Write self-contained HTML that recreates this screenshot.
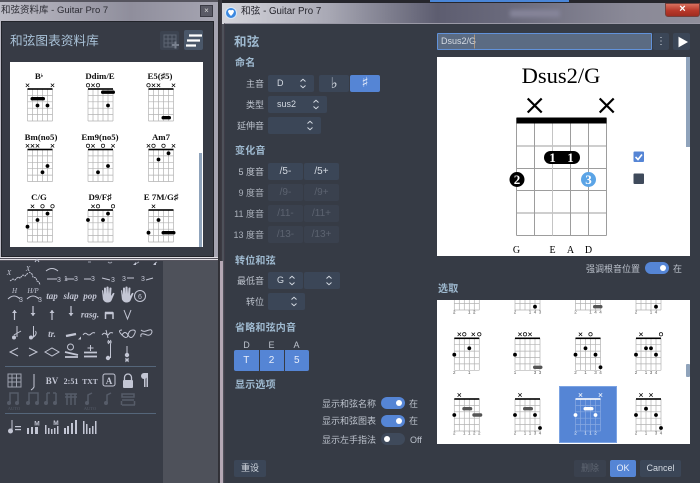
<!DOCTYPE html>
<html><head><meta charset="utf-8"><style>
*{box-sizing:border-box}
html,body{margin:0;padding:0;width:700px;height:483px;overflow:hidden;background:#4e515a}
body{position:relative;font-family:"Liberation Sans","Noto Sans CJK SC",sans-serif}
.a{position:absolute}
.t{position:absolute;white-space:nowrap;line-height:14px;font-size:9px;color:#bcc2cc}
.r{text-align:right}
.h{position:absolute;white-space:nowrap;line-height:14px;font-size:10px;letter-spacing:.2px;font-weight:bold;color:#9fbad0}
.b{position:absolute;background:#3b4657;border-radius:2px;color:#d4dae2;font-size:10px;text-align:center;height:17px;line-height:17px}
.dim{background:#3a414e;color:#5c6370}
.blue{background:#5585d5;color:#e8eefa}
.sel{position:absolute;background:#3b4657;border-radius:2px;height:17px;color:#d4dae2;font-size:9px;line-height:17px;padding-left:9px}
.sel svg{position:absolute;top:3px;right:5px}
.tg{position:absolute;width:24px;height:12px;border-radius:6px;background:#5585d5}
.tg:after{content:"";position:absolute;right:3px;top:3px;width:6px;height:6px;border-radius:3px;background:#fff}
.tg.off{background:#3f4a5b}
.tg.off:after{right:auto;left:3px}
svg{position:absolute;left:0;top:0;overflow:hidden}
.s{font-family:"Liberation Serif",serif}
</style></head><body>
<svg width="0" height="0" style="position:absolute"><defs>
<g id="g"><path d="M0 0V32M5 0V32M10 0V32M15 0V32M20 0V32M25 0V32M0 6.4H25M0 12.8H25M0 19.2H25M0 25.6H25M0 32H25" stroke="currentColor" stroke-opacity=".3" stroke-width=".7" fill="none"/><rect x="0" y="-.8" width="25" height="1.6" fill="currentColor"/></g>
<path id="x" d="M-1.7-1.7L1.7 1.7M-1.7 1.7L1.7-1.7" stroke="currentColor" stroke-width=".7" fill="none"/>
<circle id="o" r="1.7" fill="none" stroke="currentColor" stroke-width=".7"/>
<circle id="d" r="1.9" fill="currentColor"/>
<g id="ud"><path d="M-2.5 3L0 .8L2.5 3M-2.5 7L0 9.2L2.5 7" fill="none" stroke="#d4dae2" stroke-width="1"/></g>
</defs></svg>

<!-- library window -->
<div class="a" style="left:0;top:0;width:218px;height:261px;background:linear-gradient(90deg,#bdbcc6,#8f8e9c 60%,#a6a5b2)"></div>
<div class="a" style="left:0;top:0;width:218px;height:2px;background:#55545e"></div>
<div class="a" style="left:0;top:257px;width:218px;height:4px;background:repeating-linear-gradient(180deg,#e2e0e6 0 1px,#55545e 1px 2px)"></div>
<div class="t" style="left:1px;top:4px;color:#2c2c34;font-size:9.5px">和弦资料库 - Guitar Pro 7</div>
<div class="a" style="left:200px;top:5px;width:13px;height:12px;background:#5a5a66;border:1px solid #3a3a44;color:#ddd;font-size:8px;line-height:9px;text-align:center">×</div>
<div class="a" style="left:1px;top:21px;width:213px;height:236px;background:#373b45;border:1px solid #22242a"></div>
<div class="t" style="left:10px;top:33px;font-size:12.7px;line-height:16px;color:#a9c2d8">和弦图表资料库</div>
<div class="a" style="left:160px;top:31px;width:19px;height:19px;background:#3c4350;border-radius:2px"></div>
<div class="a" style="left:184px;top:30px;width:19px;height:20px;background:#4a5769;border-radius:2px"></div>
<div class="a" style="left:10px;top:62px;width:193px;height:185px;background:#fff"></div>
<div class="a" style="left:199px;top:153px;width:3px;height:94px;background:#8fa3bb"></div>

<!-- main svg for library -->
<svg width="700" height="483" style="color:#000">
<path d="M164 35h12v12h-12zM164 39h12M164 43h12M168 35v12M172 35v12" fill="none" stroke="#5d6472"/><path d="M172 45h7M175.500 41.500v7" stroke="#78808e" stroke-width="2"/>
<path d="M190 35.500h13M188 40.500h13M187 45.500h10" stroke="#fff" stroke-width="2.200" fill="none" transform="translate(-1 0)"/>
<g class="s" font-size="8.8" font-weight="bold" text-anchor="middle" fill="#111">
<text x="39" y="79">B<tspan font-size="5" dy="-2">♭</tspan></text><text x="100" y="79">Ddim/E</text><text x="160" y="79">E5(♯5)</text>
<text x="41" y="140">Bm(no5)</text><text x="100" y="140">Em9(no5)</text><text x="161" y="140">Am7</text>
<text x="39" y="200">C/G</text><text x="100" y="200">D9/F♯</text><text x="161" y="200">E 7M/G♯</text>
</g>
<g transform="translate(27.500 89)"><use href="#g"/><use href="#x" x="0" y="-3.700"/><use href="#x" x="25" y="-3.700"/><rect x="3" y="8" width="14.500" height="3.400" rx="1.700"/><use href="#d" x="10" y="16.500"/><use href="#d" x="20" y="16.500"/></g>
<g transform="translate(88 89)"><use href="#g"/><use href="#o" x="0" y="-3.700"/><use href="#x" x="5" y="-3.700"/><use href="#o" x="10" y="-3.700"/><rect x="13" y="1.500" width="14" height="3.400" rx="1.700"/><use href="#d" x="20" y="16.500"/></g>
<g transform="translate(148.500 89)"><use href="#g"/><use href="#o" x="0" y="-3.700"/><use href="#x" x="5" y="-3.700"/><use href="#x" x="10" y="-3.700"/><use href="#x" x="25" y="-3.700"/><rect x="13" y="27" width="9.500" height="3.400" rx="1.700"/></g>
<g transform="translate(27.500 149.500)"><use href="#g"/><use href="#x" x="0" y="-3.700"/><use href="#x" x="5" y="-3.700"/><use href="#x" x="10" y="-3.700"/><use href="#x" x="25" y="-3.700"/><use href="#d" x="20" y="16.500"/><use href="#d" x="15" y="22.800"/></g>
<g transform="translate(88 149.500)"><use href="#g"/><use href="#o" x="0" y="-3.700"/><use href="#x" x="5" y="-3.700"/><use href="#o" x="15" y="-3.700"/><use href="#x" x="25" y="-3.700"/><use href="#d" x="20" y="16.500"/><use href="#d" x="10" y="22.800"/></g>
<g transform="translate(148.500 149.500)"><use href="#g"/><use href="#x" x="0" y="-3.700"/><use href="#o" x="5" y="-3.700"/><use href="#o" x="15" y="-3.700"/><use href="#x" x="25" y="-3.700"/><use href="#d" x="20" y="3.800"/><use href="#d" x="10" y="10"/></g>
<g transform="translate(27.500 210)"><use href="#g"/><use href="#x" x="5" y="-3.700"/><use href="#o" x="15" y="-3.700"/><use href="#o" x="25" y="-3.700"/><use href="#d" x="20" y="3.600"/><use href="#d" x="10" y="10"/><use href="#d" x="0" y="16.700"/></g>
<g transform="translate(88 210)"><use href="#g"/><use href="#x" x="5" y="-3.700"/><use href="#o" x="10" y="-3.700"/><use href="#o" x="25" y="-3.700"/><use href="#d" x="20" y="3.600"/><use href="#d" x="0" y="10"/><use href="#d" x="15" y="10"/></g>
<g transform="translate(148.500 210)"><use href="#g"/><use href="#x" x="5" y="-3.700"/><use href="#d" x="10" y="10"/><use href="#d" x="0" y="22.700"/><rect x="13" y="21" width="14" height="3.400" rx="1.700"/></g>
</svg>

<!-- palette -->
<div class="a" style="left:0;top:261px;width:163px;height:222px;background:#383c46"></div>
<svg width="163" height="483" style="color:#c3c6d4;left:0;top:0">
<g fill="none" stroke="#c3c6d4" stroke-width="1">
<path d="M10 281l3-2 2 1 3-3 2 1 3-3 2 1 3-3" stroke-dasharray="2 .6"/><path d="M29 272l3 2 1 3 3 1 1 3 2 1 1 3" stroke-dasharray="2 .6"/>
<path d="M35 262l2-3M37 259l2 3" />
<path d="M46 271q6-5 12 0"/><path d="M47 279h10M65 279h9M84 279h7M102 278l8 2M127 278h7M146 280l7-2"/>
<path d="M88 262h3M108 262q2 2 4 0M135 264l4-2M154 264l3-2" opacity=".7"/>
<path d="M8 299q6-6 12 0M27 299q6-6 12 0"/><path d="M140 296m-5.500 0a5.500 5.500 0 1 0 11 0a5.500 5.500 0 1 0-11 0"/>
<path d="M14.500 320v-10M33 306v10M52 320v-10M71 306v10" stroke-width="1.200"/>
<path d="M12 313l2.500-3 2.500 3zM30.500 313l2.500 3 2.500-3zM49.500 313l2.500-3 2.500 3zM68.500 313l2.500 3 2.500-3z" fill="#c3c6d4" stroke="none"/>
<path d="M105.500 319v-6h7.500v6" stroke-width="1.500"/><path d="M105 313h8" stroke-width="2.500"/><path d="M124 310l3.500 9 3.500-9"/>
<path d="M17 326v11M33.500 326v11q4-3 2-6" /><path d="M14 335l7-4"/>
<path d="M66 336l10-2" stroke-width="2.400"/>
<path d="M83 335q2-3 4-1t4 0 4-1M102 335q2-3 4-1t3 0 4-1M106 330l2 8" />
<path d="M122 335q3-5 6 0t6 0 -1-5 -5 5-6 0 0-5" /><path d="M141 337q-1-4 3-3l3 1q4 1 5-3 0-3-3-2l-3 1q-3 1-5-1"/>
<path d="M18 348l-8 4 8 4M29 348l8 4-8 4M45 352l7-4 7 4-7 4z"/>
<path d="M65 352l13 3M65 357h13M84 352.500h13" stroke-width="1.800"/><path d="M84 356.500h13" stroke-width="1.800"/><circle cx="70.500" cy="347" r="3"/><path d="M90.500 345v6M87.500 348h6"/>
<path d="M110.500 344v14M127 346v9"/><path d="M107 342h5M108 340l3 4M111 340l-3 4M125 360h4M125.500 358l3 4M128.500 358l-3 4"/>
<path d="M8 374h13v13h-13zM8 378h13M8 382h13M12 374v13M16.500 374v13" stroke="#9da1ad"/>
<path d="M34 374v13q-1 2-3 3" />
<rect x="103" y="374" width="12" height="12" rx="2"/>
<path d="M124.500 381v-3.500a3.500 3.500 0 0 1 7 0v3.500" stroke-width="1.300"/>
</g>
<g fill="#c3c6d4">
<circle cx="14" cy="337.500" r="2"/><circle cx="31" cy="337.500" r="2"/><circle cx="108" cy="358" r="2.200"/><circle cx="127" cy="355" r="2.200"/>
<path d="M103 300l-1-9q0-1 1-1l1 5v-7q1-1 2 0l.5 6v-7q1-1 2 0l.5 7 .5-6q1-1 2 0l-.5 8 2-3q1-.5 1.500.5l-3 7q-1 2-4 2-3 0-4.500-3z"/>
<path d="M122 300l-1-9q0-1 1-1l1 5v-7q1-1 2 0l.5 6v-7q1-1 2 0l.5 7 .5-6q1-1 2 0l-.5 8 2-3q1-.5 1.500.5l-3 7q-1 2-4 2-3 0-4.500-3z"/>
<rect x="123" y="380" width="10" height="8" rx="1"/>
<path d="M78 339.500l3-3v3z"/><path d="M133 265l3-3v3zM153 265l3-3v3z"/>
<path d="M144 373h4v14h-1.500v-12h-1v12h-1.500z"/><circle cx="144" cy="376" r="3"/>
</g>
<g class="s" fill="#c3c6d4" text-anchor="middle">
<g font-size="7" font-style="italic"><text x="9" y="275">X</text><text x="28" y="271">X</text><text x="14.500" y="293">H</text><text x="33" y="293">H/P</text></g>
<g font-size="9" font-style="italic" font-weight="bold"><text x="52" y="299">tap</text><text x="71" y="299">slap</text><text x="90" y="299">pop</text><text x="90" y="317.500">rasg.</text><text x="52" y="337">tr.</text></g>
<g font-size="7" font-family="Liberation Sans"><text x="59" y="282">3</text><text x="66" y="281">1</text><text x="76" y="281">3</text><text x="93" y="281">3</text><text x="113" y="282">3</text><text x="124" y="281">3</text><text x="143" y="281">3</text><text x="21" y="302">3</text><text x="40" y="302">3</text><text x="140" y="299">6</text></g>
<g font-weight="bold"><text x="52" y="384" font-size="9">BV</text><text x="71" y="384" font-size="8">2:51</text><text x="90" y="384" font-size="7.500">TXT</text><text x="109" y="384" font-size="9">A</text></g>
</g>
<g fill="none" stroke="#565c69" stroke-width="1.500">
<path d="M10 403v-10h8v10M29 403v-10h9v10M47 403v-10M56 393v10M47 393h3M53 393h3"/><path d="M65 394h12M67 394v11M71 394v11M75 394v11M65 397h12"/><path d="M88 403v-8l4-2M107 403v-8l4-2"/><path d="M122 394h12v3h-12zM122 400h12M122 405h13M121.500 401v4M134.500 401v4"/>
</g>
<g fill="#565c69"><circle cx="9" cy="403" r="2"/><circle cx="17" cy="403" r="2"/><circle cx="28" cy="403" r="2"/><circle cx="37" cy="403" r="2"/><circle cx="46" cy="403" r="2"/><circle cx="55" cy="403" r="2"/><circle cx="87" cy="403" r="2"/><circle cx="106" cy="403" r="2"/>
<text x="14" y="410" font-size="4.500" text-anchor="middle" font-family="Liberation Serif">AUTO</text><text x="90" y="410" font-size="4.500" text-anchor="middle" font-family="Liberation Serif">AUTO</text></g>
<path d="M5 366.500h151M5 413.500h151" stroke="#55667a"/>
<g fill="#c3c6d4">
<rect x="11.500" y="420" width="1" height="11"/><circle cx="10.500" cy="431" r="2.500"/><rect x="15" y="426" width="6" height="1.200"/><rect x="15" y="429" width="6" height="1.200"/>
<path d="M27 428h2v6h-2zM31 427h2v7h-2zM35 427h3v7h-3z"/>
<path d="M45 425h1.500v9h-1.500zM48 428h1.500v6h-1.500zM51 429h1.500v5h-1.500zM54 428h1.500v6h-1.500zM57 426h1.500v8h-1.500z"/>
<path d="M64 428h2v6h-2zM67 426h2v8h-2zM71 423h2v11h-2zM75 420h2v14h-2z"/>
<path d="M83 421h1.500v13h-1.500zM86 424h1.500v10h-1.500zM89 428h1.500v6h-1.500zM92 426h1.500v8h-1.500zM95 421h1.500v13h-1.500z"/>
<text x="37" y="425.500" font-size="6.500" font-weight="bold" text-anchor="middle">M</text><text x="56" y="425" font-size="6.500" font-weight="bold" text-anchor="middle">M</text>
</g>
</svg>

<!-- dialog frame -->
<div class="a" style="left:218px;top:0;width:4px;height:483px;background:linear-gradient(90deg,#2e2e34,#3d3c44)"></div>
<div class="a" style="left:220px;top:261px;width:3px;height:222px;background:#b5a8b5"></div>
<div class="a" style="left:222px;top:2px;width:478px;height:22px;background:linear-gradient(90deg,#d6d6dc 0,#a9a9b5 22%,#5d5d70 45%,#6a6a7c 60%,#8a8997 85%,#8f8e9a 100%)"></div>
<div class="a" style="left:222px;top:0;width:478px;height:3px;background:#26262c"></div>
<div class="a" style="left:430px;top:0;width:139px;height:1.500px;background:#4a86d8"></div>
<div class="a" style="left:510px;top:10px;width:50px;height:7px;background:#86859a;filter:blur(2px)"></div>
<div class="a" style="left:665px;top:3px;width:35px;height:14px;background:linear-gradient(180deg,#d8705e,#b8382a 55%,#a02c20);border:1px solid #73403c;border-radius:0 0 3px 3px;color:#fff;font-size:11px;font-weight:bold;line-height:11px;text-align:center">×</div>
<div class="a" style="left:225px;top:7px;width:12px;height:12px;border-radius:6px;background:#3b88e0;border:1px solid #d8e8f8"></div>
<svg width="700" height="483" style="left:0;top:0"><path d="M228 11q1.500-2 3-.5 1.500-1.500 3 .5 0 2-3 5-3-3-3-5z" fill="#fff"/></svg>
<div class="t" style="left:241px;top:5px;font-size:9.700px;color:#26262e;line-height:14px">和弦 - Guitar Pro 7</div>
<div class="a" style="left:224px;top:23px;width:476px;height:460px;background:#363b45;border-top:1px solid #9a99a6;border-left:1px solid #3f3d48"></div>

<!-- left column -->
<div class="h" style="left:234px;top:34px;font-size:12.500px;line-height:16px">和弦</div>
<div class="h" style="left:235px;top:57px">命名</div>
<div class="t r" style="left:224px;width:40px;top:77px">主音</div>
<div class="sel" style="left:268px;top:75px;width:46px">D<svg style="left:auto" width="12" height="11" viewBox="-6 0 12 10"><use href="#ud"/></svg></div>
<div class="b" style="left:319px;top:75px;width:30px;font-family:'DejaVu Sans';font-size:15px">♭</div>
<div class="b blue" style="left:350px;top:75px;width:30px;font-family:'DejaVu Sans';font-size:14px">♯</div>
<div class="t r" style="left:224px;width:40px;top:98px">类型</div>
<div class="sel" style="left:268px;top:96px;width:59px">sus2<svg style="left:auto" width="12" height="11" viewBox="-6 0 12 10"><use href="#ud"/></svg></div>
<div class="t r" style="left:224px;width:40px;top:119px">延伸音</div>
<div class="sel" style="left:268px;top:117px;width:53px"><svg style="left:auto" width="12" height="11" viewBox="-6 0 12 10"><use href="#ud"/></svg></div>
<div class="h" style="left:235px;top:145px">变化音</div>
<div class="t r" style="left:224px;width:40px;top:165px">5 度音</div>
<div class="b" style="left:268px;top:163px;width:35px">/5-</div><div class="b" style="left:304px;top:163px;width:35px">/5+</div>
<div class="t r" style="left:224px;width:40px;top:186px;color:#aab0ba">9 度音</div>
<div class="b dim" style="left:268px;top:184px;width:35px">/9-</div><div class="b dim" style="left:304px;top:184px;width:35px">/9+</div>
<div class="t r" style="left:224px;width:40px;top:207px;color:#aab0ba">11 度音</div>
<div class="b dim" style="left:268px;top:205px;width:35px">/11-</div><div class="b dim" style="left:304px;top:205px;width:35px">/11+</div>
<div class="t r" style="left:224px;width:40px;top:228px;color:#aab0ba">13 度音</div>
<div class="b dim" style="left:268px;top:226px;width:35px">/13-</div><div class="b dim" style="left:304px;top:226px;width:35px">/13+</div>
<div class="h" style="left:235px;top:255px">转位和弦</div>
<div class="t r" style="left:224px;width:40px;top:274px">最低音</div>
<div class="sel" style="left:268px;top:272px;width:35px">G<svg style="left:auto" width="12" height="11" viewBox="-6 0 12 10"><use href="#ud"/></svg></div>
<div class="sel" style="left:304px;top:272px;width:36px"><svg style="left:auto" width="12" height="11" viewBox="-6 0 12 10"><use href="#ud"/></svg></div>
<div class="t r" style="left:224px;width:40px;top:295px">转位</div>
<div class="sel" style="left:268px;top:293px;width:37px"><svg style="left:auto" width="12" height="11" viewBox="-6 0 12 10"><use href="#ud"/></svg></div>
<div class="h" style="left:235px;top:322px">省略和弦内音</div>
<div class="t" style="left:234px;width:25px;top:338px;text-align:center">D</div><div class="t" style="left:259px;width:25px;top:338px;text-align:center">E</div><div class="t" style="left:284px;width:25px;top:338px;text-align:center">A</div>
<div class="b blue" style="left:234px;top:350px;width:24.500px;height:21px;line-height:21px;border-radius:2px 0 0 2px">T</div>
<div class="b blue" style="left:259.500px;top:350px;width:24px;height:21px;line-height:21px;border-radius:0">2</div>
<div class="b blue" style="left:284.500px;top:350px;width:24.500px;height:21px;line-height:21px;border-radius:0 2px 2px 0">5</div>
<div class="h" style="left:235px;top:379px">显示选项</div>
<div class="t r" style="left:300px;width:76px;top:397px">显示和弦名称</div><div class="tg" style="left:381px;top:397px"></div><div class="t" style="left:409px;top:397px">在</div>
<div class="t r" style="left:300px;width:76px;top:414px">显示和弦图表</div><div class="tg" style="left:381px;top:415px"></div><div class="t" style="left:409px;top:414px">在</div>
<div class="t r" style="left:300px;width:76px;top:433px">显示左手指法</div><div class="tg off" style="left:381px;top:433px"></div><div class="t" style="left:410px;top:433px">Off</div>
<div class="b" style="left:234px;top:460px;width:32px;font-size:9px">重设</div>

<!-- right column -->
<div class="a" style="left:437px;top:33px;width:215px;height:17px;background:#5b6b82;border:1px solid #6192da;border-radius:1px;color:#d5dbe3;font-size:9px;line-height:15px;padding-left:3px">Dsus2/G</div>
<div class="b" style="left:653px;top:33px;width:16px">⋮</div>
<div class="b" style="left:673px;top:33px;width:17px"></div>
<div class="a" style="left:437px;top:57px;width:253px;height:199px;background:#fff"></div>
<div class="a" style="left:686px;top:57px;width:3.500px;height:90px;background:#8fa3bb"></div>
<div class="t r" style="left:570px;width:70px;top:262px">强调根音位置</div><div class="tg" style="left:645px;top:262px"></div><div class="t" style="left:673px;top:262px">在</div>
<div class="h" style="left:438px;top:283px">选取</div>
<div class="a" style="left:437px;top:300px;width:253px;height:144px;background:#fff"></div>
<div class="a" style="left:559px;top:386px;width:58px;height:57px;background:#5585d5;border:1px solid #7ba3e3"></div>
<div class="a" style="left:686px;top:364px;width:3.500px;height:13px;background:#8fa3bb;border-radius:1px"></div>
<div class="b dim" style="left:574px;top:460px;width:32px;font-size:9px;color:#5f6672">删除</div>
<div class="b blue" style="left:610px;top:460px;width:26px;font-size:9px">OK</div>
<div class="b" style="left:640px;top:460px;width:41px;font-size:9px">Cancel</div>

<svg width="700" height="483" style="color:#000">
<path d="M679 37.500l8 4.500-8 4.500z" fill="#fff" stroke="#fff"/>
<path d="M474.500 34.500v14" stroke="#c9a882" stroke-width=".7"/>
<text class="s" x="561" y="83" font-size="22.500" text-anchor="middle" fill="#000">Dsus2/G</text>
<path d="M527.700 98.500l14 14M541.700 98.500l-14 14M599.700 98.500l14 14M613.700 98.500l-14 14" stroke="#000" stroke-width="2.200"/>
<path d="M516.500 118v117.500M534.500 123v112.500M552.500 123v112.500M570.500 123v112.500M588.500 123v112.500M606.500 118v117.500M516.500 146h90M516.500 168.500h90M516.500 190.500h90M516.500 213h90M516.500 235.500h90" stroke="#9d9d9d" stroke-width="1" fill="none"/>
<path d="M552.500 123v112.500" stroke="#c4c4c4"/>
<rect x="516.500" y="117.500" width="90" height="6" fill="#000"/>
<rect x="544" y="151" width="36" height="13" rx="6.500" fill="#000"/>
<g class="s" font-size="13" font-weight="bold" fill="#fff" text-anchor="middle"><text x="552.500" y="162">1</text><text x="570.500" y="162">1</text></g>
<circle cx="517" cy="179.500" r="7.500" fill="#000"/><text class="s" x="517" y="184" font-size="13" font-weight="bold" fill="#fff" text-anchor="middle">2</text>
<circle cx="588.500" cy="179.500" r="7.500" fill="#5ba4e6"/><text class="s" x="588.500" y="184" font-size="13" font-weight="bold" fill="#fff" text-anchor="middle">3</text>
<rect x="633.500" y="151.500" width="10.500" height="10.500" rx="1" fill="#5585d5"/><path d="M635.500 157l2.500 2.500 4-5" stroke="#fff" stroke-width="1.600" fill="none"/>
<rect x="633.500" y="173.500" width="10.500" height="10.500" rx="1" fill="#3f4a5b"/>
<g class="s" font-size="10" text-anchor="middle" fill="#000"><text x="516.500" y="253">G</text><text x="552.500" y="253">E</text><text x="570.500" y="253">A</text><text x="588.500" y="253">D</text></g>
<clipPath id="c"><rect x="437" y="300" width="253" height="144"/></clipPath>
<g clip-path="url(#c)">
<g font-size="4.500" fill="#555" font-family="Liberation Sans" text-anchor="middle">
<g transform="translate(454.300 278)"><use href="#g"/><text x="0 15 20" y="35.500" fill="#333">212</text></g>
<g transform="translate(515 278)"><use href="#g"/><use href="#d" x="20" y="28.700"/><text x="0 15 20 25" y="35.500">2143</text></g>
<g transform="translate(575.500 278)"><use href="#g"/><rect x="17.500" y="27" width="9.500" height="3.400" rx="1.700"/><text x="0 15 20 25" y="35.500">2144</text></g>
<g transform="translate(636 278)"><use href="#g"/><use href="#d" x="20" y="28.700"/><text x="0 15 20" y="35.500">214</text></g>
<g transform="translate(454.300 338.300)"><use href="#g"/><use href="#x" x="5" y="-4"/><use href="#o" x="10" y="-4"/><use href="#x" x="19" y="-4"/><use href="#o" x="25" y="-4"/><use href="#d" x="15" y="10"/><use href="#d" x="0" y="16.400"/><text x="0 15" y="35.500">21</text></g>
<g transform="translate(515 338.300)"><use href="#g"/><use href="#x" x="5" y="-4"/><use href="#o" x="10" y="-4"/><use href="#x" x="15" y="-4"/><use href="#d" x="0" y="16.400"/><rect x="18" y="27.300" width="9.500" height="3.400" rx="1.700"/><text x="0 20 25" y="35.500">133</text></g>
<g transform="translate(575.500 338.300)"><use href="#g"/><use href="#x" x="5" y="-4"/><use href="#o" x="15" y="-4"/><use href="#d" x="10" y="10"/><use href="#d" x="0" y="16.400"/><use href="#d" x="20" y="16.400"/><use href="#d" x="25" y="29"/><text x="0 10 20 25" y="35.500">2134</text></g>
<g transform="translate(636 338.300)"><use href="#g"/><use href="#x" x="5" y="-4"/><use href="#o" x="25" y="-4"/><use href="#d" x="10" y="10"/><use href="#d" x="15" y="10"/><use href="#d" x="0" y="16.400"/><use href="#d" x="20" y="16.400"/><text x="0 10 15 20" y="35.500">2134</text></g>
<g transform="translate(454.300 399)"><use href="#g"/><use href="#x" x="5" y="-4"/><rect x="8" y="8" width="10" height="3.400" rx="1.700"/><use href="#d" x="0" y="16"/><rect x="18" y="14.300" width="10" height="3.400" rx="1.700"/><text x="0 10 15 20 25" y="35.500">21122</text></g>
<g transform="translate(515 399)"><use href="#g"/><use href="#x" x="5" y="-4"/><rect x="8" y="8" width="10" height="3.400" rx="1.700"/><use href="#d" x="0" y="16"/><use href="#d" x="20" y="16"/><use href="#d" x="25" y="29"/><text x="0 10 15 20 25" y="35.500">21134</text></g>
<g transform="translate(575.500 399)" style="color:#fff"><use href="#g"/><use href="#x" x="5" y="-4"/><use href="#x" x="25" y="-4"/><rect x="8" y="8" width="10" height="3.400" rx="1.700" fill="#fff"/><use href="#d" x="0" y="16"/><use href="#d" x="20" y="16"/><text x="0 10 15 20" y="35.500" fill="#fff">2112</text></g>
<g transform="translate(636 399)"><use href="#g"/><use href="#x" x="5" y="-4"/><use href="#x" x="15" y="-4"/><use href="#d" x="10" y="9.700"/><use href="#d" x="0" y="16"/><use href="#d" x="20" y="16"/><use href="#d" x="25" y="29"/><text x="0 10 20 25" y="35.500">2134</text></g>
</g>
</g>
</svg>
</body></html>
